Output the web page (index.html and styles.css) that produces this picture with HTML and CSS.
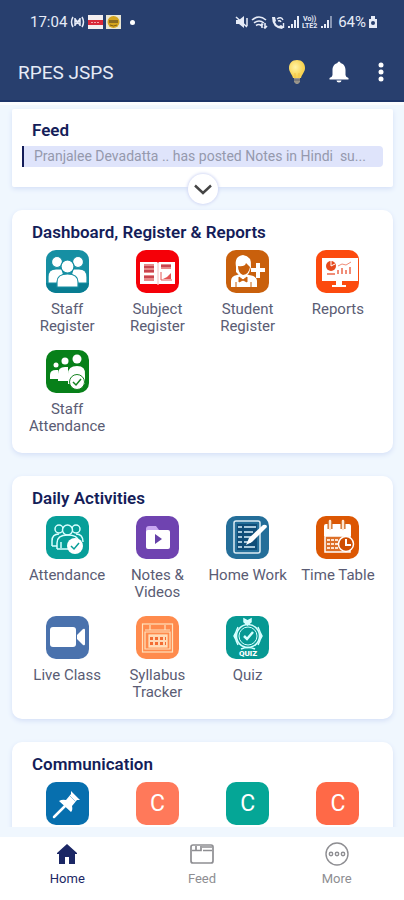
FILE: index.html
```html
<!DOCTYPE html>
<html lang="en">
<head>
<meta charset="utf-8">
<meta name="viewport" content="width=device-width, initial-scale=1">
<title>RPES JSPS</title>
<link rel="stylesheet" href="styles.css">
</head>
<body>
<div class="app">
  <header class="header">
    <div class="status">
      <div class="status-group">
        <span>17:04</span>
        <svg class="status-icon" width="15" height="12" viewBox="0 0 15 12" fill="none" stroke="currentColor" stroke-width="1.5"><path d="M3 1Q0 6 3 11M12 1q3 5 0 10M5 2v8M10 2v8M5 3l5 6M5 9l5-6"/></svg>
        <svg class="status-icon" width="15" height="14" viewBox="0 0 15 14"><path fill="#f3eef0" d="M0 0h15v14H0z"/><path fill="#d9283a" d="M0 5h15v5H0z"/><path d="M3 7.500h9" stroke="#f3a5ab" stroke-dasharray="2 1"/></svg>
        <svg class="status-icon" width="15" height="14" viewBox="0 0 15 14"><path fill="#e9e6d4" d="M0 0h15v14H0z"/><circle cx="7.500" cy="7" r="6" fill="#d5a51d"/><path d="M3 5h9v3H3z" fill="#8a6b20"/><path d="M4 10q3.500 2 7 0" stroke="#805d14" fill="none"/></svg>
        <span class="status-dot"></span>
      </div>
      <div class="status-group">
        <svg width="13" height="12" viewBox="0 0 13 12"><path fill="currentColor" d="M1 4h3l5-4v12L4 8H1z"/><path d="M1 1l11 10M12 2v8" stroke="currentColor" stroke-width="1.500"/></svg>
        <svg width="17" height="13" viewBox="0 0 17 13" fill="none" stroke="currentColor" stroke-width="1.600"><path d="M1 4q7-6 14 0M3 7q5-4 10 0M5 9.500q3-2 5 0M11 12V8M14 7v5M9.500 10L11 8l1 1M13 11l1 1 2-2"/></svg>
        <svg width="14" height="13" viewBox="0 0 14 13"><path d="M1 1l3 0 1 4-1 1q1 3 4 4l2-1 3 2-2 2Q1 12 1 1z" fill="currentColor"/><path d="M6 3q4-3 6 1M7 5q2-1 3 1M12.500 7v5" fill="none" stroke="currentColor" stroke-width="1.400"/></svg>
        <svg width="11" height="12" viewBox="0 0 11 12" fill="currentColor"><path d="M0 10h2v2H0zM3 8h2v4H3zM6 4h2v8H6zM9 0h2v12H9z"/></svg>
        <svg width="16" height="14" viewBox="0 0 16 14" fill="currentColor"><text x="1" y="6" class="lte">Vo))</text><text x="0" y="13" class="lte">LTE2</text></svg>
        <svg width="11" height="12" viewBox="0 0 11 12" fill="currentColor"><path d="M0 10h2v2H0zM3 8h2v4H3zM6 4h2v8H6z"/><path opacity=".5" d="M9 0h2v12H9z"/></svg>
        <span class="battery-text">64%</span>
        <svg width="8" height="12" viewBox="0 0 8 12"><path fill="currentColor" d="M2 0h4v3h2v9H0V3h2z"/><circle cx="4" cy="7" r="2" fill="#283f6e"/></svg>
      </div>
    </div>
    <div class="toolbar">
      <h1>RPES JSPS</h1>
      <div class="actions">
        <button type="button" aria-label="Tips"><svg width="18" height="26" viewBox="0 0 18 26"><defs><radialGradient id="bulb" cx=".4" cy=".4"><stop stop-color="#fff4a8"/><stop offset="1" stop-color="#f8d352"/></radialGradient></defs><path fill="url(#bulb)" d="M9 1C4 1 1 4.500 1 9c0 4 3 6 4 10h8c1-4 4-6 4-10 0-4.500-3-8-8-8z"/><path d="M7 14v5M11 14v5" fill="none" stroke="#f2c14a"/><path fill="#98948a" d="M6 19h6v4l-2 2H8l-2-2z"/><path d="M6 21h6" stroke="#5b5f6e"/></svg></button>
        <button type="button" aria-label="Notifications"><svg width="20" height="22" viewBox="0 0 20 22"><path fill="#fff" d="M8.500 2a1.500 1.500 0 0 1 3 0C15 3 16.500 6 16.500 9v5q0 2 3 3v1.500H.5V17q3-1 3-3V9c0-3 1.500-6 5-7zM7.500 19.500h5a2.500 2 0 0 1-5 0z"/></svg></button>
        <button type="button" aria-label="Menu"><svg width="6" height="20" viewBox="0 0 6 20" fill="#fff"><circle cx="3" cy="3" r="2.500"/><circle cx="3" cy="10" r="2.500"/><circle cx="3" cy="17" r="2.500"/></svg></button>
      </div>
    </div>
  </header>

  <main class="content">
    <section class="card feed">
      <h2>Feed</h2>
      <p class="feed-item">Pranjalee Devadatta .. has posted Notes in Hindi  su...</p>
      <button class="expand" type="button" aria-label="Expand feed"><svg width="18" height="11" viewBox="0 0 18 11" fill="none" stroke="#454545" stroke-width="2.400"><path d="M1 1.500l8 7.500 8-7.500"/></svg></button>
    </section>

    <section class="card">
      <h2>Dashboard, Register &amp; Reports</h2>
      <div class="grid">
        <a class="tile" href="#"><span class="icon teal-blue"><svg viewBox="0 0 43 43"><path d="M0 33h43v10H0z" fill="#087d92"/><g fill="#fff" stroke="#168fa3" stroke-width="1.200"><circle cx="11" cy="12" r="5.500"/><circle cx="32" cy="12" r="5.500"/><path d="M2 33V27q0-8 8-8h6l4 14zM41 33V27q0-8-8-8h-6l-4 14z"/><circle cx="21.500" cy="16.500" r="6.500"/><path d="M11 37v-5q0-8 10.500-8T32 32v5z"/></g></svg></span>Staff<br>Register</a>
        <a class="tile" href="#"><span class="icon red"><svg viewBox="0 0 43 43"><path fill="#fff" d="M4 12h17l1 1 1-1h16v22H23l-1 1-1-1H4z"/><path d="M22 13v21" stroke="#f3baba"/><path fill="#e88a8a" d="M8 14h10v17H8zM25 14h10v5H25z"/><path d="M8 17h10M8 21h10M8 27h10M25 16h10" stroke="#bd2f3d" stroke-width="1.500"/><path d="M8 24h10" stroke="#fff" stroke-width="2"/><path d="M25 22v8h11" fill="none" stroke="#e35454"/><path d="M27 29l4-2 4-4v6z" fill="#e35454"/></svg></span>Subject<br>Register</a>
        <a class="tile" href="#"><span class="icon brown"><svg viewBox="0 0 43 43"><path d="M5 37v-6q0-5 6-6l3-1h6l3 1q8 1 8 6v6z" fill="#fff"/><path d="M10 17Q8 6 17 5q9 1 8 12l-2 6-3 3h-6l-4-4z" fill="#fff"/><path d="M12 16q7 1 8-3l4 4q-1 7-7 8-5-2-5-9z" fill="#c9600c"/><path d="M13 27l4 3 4-3v5l-4-2-4 2zM10 32v5M25 32v5" fill="#c9600c" stroke="#c9600c"/><path d="M32 13v15M25 20h14" stroke="#fff" stroke-width="4"/></svg></span>Student<br>Register</a>
        <a class="tile" href="#"><span class="icon orange-red"><svg viewBox="0 0 43 43"><path fill="#fff" d="M6 8h36v23H26v4h4v2H16v-2h4v-4H6z"/><circle cx="15" cy="16" r="5" fill="#e6491c"/><path d="M15 16V11M15 16l4-2" stroke="#fff"/><path d="M11 24h8M22 24v-4M26 24v-6M30 24v-4M34 24v-7" fill="none" stroke="#f08d78" stroke-width="2"/><path d="M22 16l4-2 4 1 5-3" fill="none" stroke="#f08d78"/></svg></span>Reports</a>
        <a class="tile" href="#"><span class="icon green"><svg viewBox="0 0 43 43"><g fill="#fff"><circle cx="10" cy="15" r="2.500"/><circle cx="19" cy="11" r="3.500"/><circle cx="31" cy="9" r="4.500"/><path d="M4 29v-4q0-5 6-5h2v9zM12 31v-7q0-7 7-7h3v14zM22 34V24q0-8 9-8t8 9v9z"/><circle cx="31" cy="32" r="7.500" stroke="#158320"/></g><path d="M27 32l3 3 5-6" fill="none" stroke="#158320" stroke-width="1.500"/></svg></span>Staff<br>Attendance</a>
      </div>
    </section>

    <section class="card">
      <h2>Daily Activities</h2>
      <div class="grid">
        <a class="tile" href="#"><span class="icon teal"><svg viewBox="0 0 43 43"><g fill="none" stroke="#d9ffff" stroke-width="1.500"><circle cx="13" cy="13" r="4"/><circle cx="30" cy="13" r="4"/><path d="M6 30v-5q0-7 7-7M6 30h5M37 26q0-8-7-8"/><circle cx="21.500" cy="14" r="5" fill="#079f99"/><path d="M11 33v-6q0-8 10.500-8T32 25M11 33h11M15 32v-6"/></g><circle cx="29" cy="30" r="8" fill="#fff"/><path d="M25 30l3 3 5-6" fill="none" stroke="#079f99" stroke-width="1.500"/></svg></span>Attendance</a>
        <a class="tile" href="#"><span class="icon purple"><svg viewBox="0 0 43 43"><path fill="#c9a7f2" d="M10 13q0-3 3-3h7l3 4v8H10z"/><rect x="10" y="14" width="24" height="19" rx="2" fill="#fff"/><path fill="#6540a8" d="M19 18l7 5-7 5z"/></svg></span>Notes &amp;<br>Videos</a>
        <a class="tile" href="#"><span class="icon blue"><svg viewBox="0 0 43 43"><rect x="8" y="5" width="26" height="32" rx="2" fill="none" stroke="#dcecf4" stroke-width="1.500"/><rect x="11" y="8" width="20" height="26" fill="#104d78"/><path d="M12 11h4M12 16h4M12 21h4M12 26h4M12 31h4M18 11h12M18 16h9M18 21h7M18 26h7M18 31h11" stroke="#a9c9dc" stroke-width="1.800"/><path d="M20 29l3-7L37 9q4-1 4 2L26 26z" fill="#fff"/></svg></span>Home Work</a>
        <a class="tile" href="#"><span class="icon orange"><svg viewBox="0 0 43 43"><path fill="#fff" d="M8 10q0-2 2-2h23q2 0 2 2v10H8z"/><path d="M14 5v8M27 5v8" stroke="#cb641a" stroke-width="5"/><path d="M14 5v8M27 5v8" stroke="#ffe5cf" stroke-width="2.500" stroke-linecap="round"/><rect x="9" y="20" width="25" height="16" fill="#dc7029" stroke="#fff" stroke-width="1.500"/><path d="M11 24h12M11 28h12M11 32h12" stroke="#fde2d0" stroke-width="2" stroke-dasharray="3 1"/><circle cx="30" cy="28" r="7.500" fill="#cf4e02" stroke="#fff" stroke-width="1.500"/><path d="M30 23v6h5" fill="none" stroke="#fff" stroke-width="2"/></svg></span>Time Table</a>
        <a class="tile" href="#"><span class="icon steel"><svg viewBox="0 0 43 43"><rect x="4" y="11" width="26" height="20" rx="3" fill="#fff"/><path fill="#fff" d="M31 19l6-6q2-1 2 1v14q0 2-2 1l-6-6z"/></svg></span>Live Class</a>
        <a class="tile" href="#"><span class="icon peach"><svg viewBox="0 0 43 43" fill="none" stroke="#ffe2bd" stroke-width="1.200"><rect x="6.500" y="8" width="30" height="28"/><path d="M9 14h25M9 16h25v17H9zM14 9v5M29 9v5" /><rect x="13" y="19" width="18" height="12" fill="#ffd8b5"/><path d="M14 22.500h16M14 27.500h16" stroke="#f36c32" stroke-width="3" stroke-dasharray="3 2"/></svg></span>Syllabus<br>Tracker</a>
        <a class="tile" href="#"><span class="icon sea"><svg viewBox="0 0 43 43" fill="none" stroke="#d7ffff" stroke-width="1.500"><path d="M18 3l3.500 2L25 3v3l-3.500 3L18 6z" fill="#d7ffff"/><circle cx="22" cy="20" r="11.500"/><path d="M12 11q-5 9 0 18M32 11q5 9 0 18M10 16l-2 4 2 4M34 16l2 4-2 4" /><circle cx="22" cy="20" r="9" stroke-width="1"/><path d="M18 20l3 3 6-7" stroke-width="2.500"/><path d="M15 33q7-3 14 0"/><text x="22" y="40" class="quiz">QUIZ</text></svg></span>Quiz</a>
      </div>
    </section>

    <section class="card">
      <h2>Communication</h2>
      <div class="grid">
        <a class="tile" href="#" aria-label="Notices"><span class="icon pin"><svg viewBox="0 0 43 43"><path d="M8 35l11-11" stroke="#fff" stroke-width="2.500" stroke-linecap="round"/><path fill="#fff" d="M25 9l9 9-3 0-5 6q1 4-1 6L13 19q3-2 7-1l5-6z"/><path d="M24 14l6 6" stroke="#9acbe2"/></svg></span></a>
        <a class="tile" href="#"><span class="icon coral">C</span></a>
        <a class="tile" href="#"><span class="icon mint">C</span></a>
        <a class="tile" href="#"><span class="icon tomato">C</span></a>
      </div>
    </section>
  </main>

  <nav class="nav">
    <a class="active" href="#"><svg width="24" height="24" viewBox="0 0 24 24"><path fill="currentColor" d="M12 2l10 9v1h-2v10h-6v-7h-4v7H4V12H2v-1z"/></svg>Home</a>
    <a href="#"><svg width="24" height="24" viewBox="0 0 24 24" fill="none" stroke="currentColor" stroke-width="1.700"><rect x="1" y="3" width="22" height="18" rx="2"/><path d="M2 8.500h4V4M6 8.500h5V4M12 5h10M13 8.500h9"/></svg>Feed</a>
    <a href="#"><svg width="24" height="24" viewBox="0 0 24 24" fill="none" stroke="currentColor" stroke-width="1.400"><circle cx="12" cy="12" r="11"/><circle cx="6" cy="12" r="1.700"/><circle cx="12" cy="12" r="1.700"/><circle cx="18" cy="12" r="1.700"/></svg>More</a>
  </nav>
</div>
</body>
</html>
```
FILE: styles.css
```css
* { box-sizing: border-box; }

body {
  margin: 0;
  font-family: Roboto, "Liberation Sans", sans-serif;
  background: #f0f7fe;
}

h1, h2, p { margin: 0; }
a { color: inherit; text-decoration: none; }
svg { display: block; }

button {
  display: block;
  padding: 0;
  border: 0;
  background: none;
  cursor: pointer;
}

.app {
  display: flex;
  flex-direction: column;
  height: 100vh;
}

.header {
  flex: none;
  background: #283f6e;
  color: #e6ebf7;
  border-bottom: 2px solid #1c3469;
}

.status {
  display: flex;
  justify-content: space-between;
  align-items: center;
  height: 44px;
  padding: 0 27px 0 30px;
  font-size: 15px;
}

.status-group {
  display: flex;
  align-items: center;
  gap: 3px;
}

.battery-text { margin-left: 3px; }

.status-dot {
  width: 5px;
  height: 5px;
  margin-left: 6px;
  border-radius: 50%;
  background: #fff;
}

.lte { font: bold 7px Roboto, sans-serif; }

.toolbar {
  display: flex;
  justify-content: space-between;
  align-items: center;
  height: 56px;
  padding: 0 20px 0 18px;
}

.toolbar h1 {
  font-size: 19px;
  font-weight: 400;
}

.actions {
  display: flex;
  align-items: center;
  gap: 23px;
}

.actions button:last-child { margin-left: 6px; }

.content {
  flex: 1;
  min-height: 0;
  overflow-y: auto;
  scrollbar-width: none;
  display: flex;
  flex-direction: column;
  gap: 23px;
  margin-bottom: 10px;
  padding: 4px 11px 0 12px;
  border-top: 3px solid #fafcff;
}

.card {
  flex: none;
  padding: 12px 10px 18px;
  border-radius: 10px;
  background: #fff;
  box-shadow: 0 2px 5px #d5e0f7;
}

.card h2 {
  padding: 0 10px;
  color: #141d59;
  font-size: 17px;
  font-weight: 600;
  line-height: 20px;
}

.feed {
  position: relative;
  padding: 11px 10px 20px;
  border-radius: 2px;
}

.feed-item {
  overflow: hidden;
  margin: 6px 0 0;
  padding: 0 4px 0 10px;
  border-left: 2px solid #141d59;
  border-radius: 0 4px 4px 0;
  background: #dfe4fb;
  color: #9599ad;
  font-size: 14px;
  line-height: 21px;
  white-space: pre;
  text-overflow: ellipsis;
}

.expand {
  position: absolute;
  bottom: -17px;
  left: 50%;
  display: grid;
  place-items: center;
  width: 30px;
  height: 30px;
  border-radius: 50%;
  background: #fff;
  box-shadow: 0 0 3px 1px #d4daf5;
  transform: translateX(-50%);
}

.grid {
  display: grid;
  grid-template-columns: repeat(4, 1fr);
  row-gap: 15px;
  margin-top: 8px;
}

.tile {
  display: block;
  color: #5a5c74;
  font-size: 15px;
  line-height: 17px;
  text-align: center;
  white-space: nowrap;
}

.icon {
  display: grid;
  place-items: center;
  width: 43px;
  height: 43px;
  margin: 0 auto 8px;
  overflow: hidden;
  border-radius: 10px;
  color: #fff;
  font-size: 23px;
}

.icon svg { width: 43px; height: 43px; }

.teal-blue { background: #168fa3; }
.red { background: #f50008; }
.brown { background: #c9600c; }
.orange-red { background: #fc4a0e; }
.green { background: #078019; }
.teal { background: #079f99; }
.purple { background: #6f43b0; }
.blue { background: #246e99; }
.orange { background: #dc5703; }
.steel { background: #4a72ad; }
.peach { background: #ff8b4d; }
.sea { background: #079993; }
.pin { background: #076fae; }
.coral { background: #ff795a; }
.mint { background: #05a696; }
.tomato { background: #ff6947; }

.quiz {
  fill: #fff;
  stroke: none;
  font: 900 8px Roboto, sans-serif;
  text-anchor: middle;
}

.nav {
  flex: none;
  display: grid;
  grid-template-columns: repeat(3, 1fr);
  height: 63px;
  padding-top: 5px;
  background: #fff;
  color: #8e8e92;
  font-size: 13px;
  line-height: 15px;
}

.nav a {
  display: flex;
  flex-direction: column;
  align-items: center;
  gap: 5px;
}

.nav .active { color: #1b2765; }
```
